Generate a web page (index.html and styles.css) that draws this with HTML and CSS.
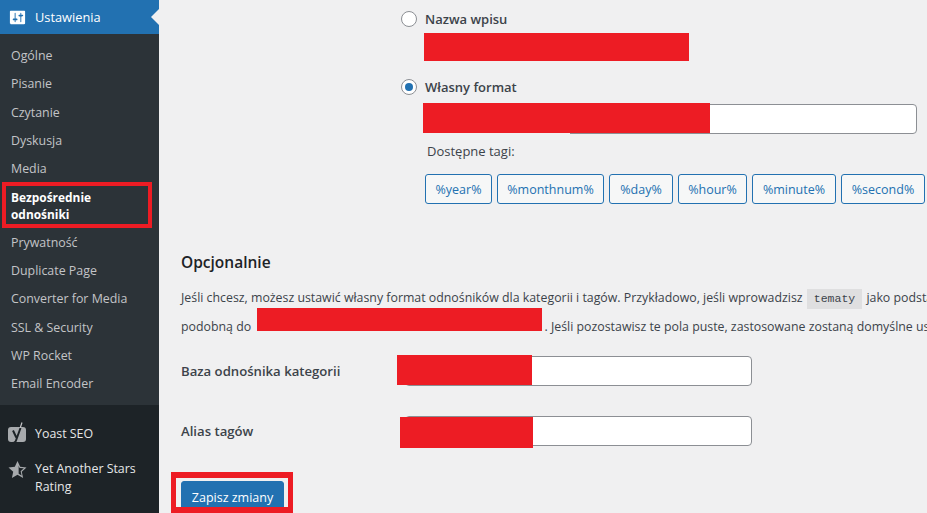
FILE: index.html
```html
<!DOCTYPE html>
<html lang="pl">
<head>
<meta charset="utf-8">
<title>Bezpośrednie odnośniki</title>
<link rel="stylesheet" href="styles.css">
</head>
<body>
<div class="layout">
  <aside class="sidebar">
    <div class="current">
      <svg class="icon-settings" width="19" height="19" viewBox="0 0 20 20"><path fill="#fff" fill-rule="evenodd" d="M18 16V4c0-.55-.45-1-1-1H3c-.55 0-1 .45-1 1v12c0 .55.45 1 1 1h14c.55 0 1-.45 1-1zM8 11h1c.55 0 1 .45 1 1s-.45 1-1 1H8v1.500c0 .28-.22.5-.5.5s-.5-.22-.5-.5V13H6c-.55 0-1-.45-1-1s.45-1 1-1h1V5.500c0-.28.22-.5.5-.5s.5.22.5.5V11zm5-2h-1c-.55 0-1-.45-1-1s.45-1 1-1h1V5.500c0-.28.22-.5.5-.5s.5.22.5.5V7h1c.55 0 1 .45 1 1s-.45 1-1 1h-1v5.500c0 .28-.22.5-.5.5s-.5-.22-.5-.5V9z"/></svg>
      <span>Ustawienia</span>
      <i class="notch"></i>
    </div>
    <nav class="submenu">
      <a>Ogólne</a>
      <a>Pisanie</a>
      <a>Czytanie</a>
      <a>Dyskusja</a>
      <a>Media</a>
      <a class="active">Bezpośrednie odnośniki</a>
      <a>Prywatność</a>
      <a>Duplicate Page</a>
      <a>Converter for Media</a>
      <a>SSL &amp; Security</a>
      <a>WP Rocket</a>
      <a>Email Encoder</a>
    </nav>
    <nav class="plugins">
      <a class="plugin">
        <svg class="icon-yoast" width="18" height="25" viewBox="0 0 18 25"><rect y="5" width="18" height="15" rx="3" fill="#a7aaad"/><path d="M14 .500 8.500 17c-.6 1.700-1.500 2.500-3.500 2.500" fill="none" stroke="#c3c4c7" stroke-width="1.200"/><path d="M12.500 6 8 18.500c-.5 1.500-1.500 2.500-3.500 2.500M5 8.500 8.300 15.500" fill="none" stroke="#1d2327" stroke-width="2"/></svg>
        <span>Yoast SEO</span>
      </a>
      <a class="plugin">
        <svg class="icon-star" width="19" height="19" viewBox="0 0 20 20"><path fill="#a7aaad" d="M10 1l2.800 6.200 6.700.7-5 4.500 1.400 6.600L10 15.600 4.100 19l1.400-6.600-5-4.500 6.700-.7z"/><path fill="#1d2327" d="M11.200 6l1 2.300 4.500.5-3.400 3.100 1 4.500-3.100-1.800z"/></svg>
        <span>Yet Another Stars Rating</span>
      </a>
    </nav>
    <div class="mark mark-link"></div>
  </aside>

  <main class="content">
    <section class="options">
      <label class="option">
        <input class="radio" type="radio" name="format">
        <span>Nazwa wpisu</span>
      </label>
      <div class="redact-line"></div>
      <label class="option option-second">
        <input class="radio" type="radio" name="format" checked>
        <span>Własny format</span>
      </label>
      <div class="format-field">
        <input class="text-input" type="text">
        <div class="redact redact-format"></div>
      </div>
      <p class="tags-label">Dostępne tagi:</p>
      <div class="tags">
        <button class="tag t1">%year%</button>
        <button class="tag t2">%monthnum%</button>
        <button class="tag t3">%day%</button>
        <button class="tag t4">%hour%</button>
        <button class="tag t5">%minute%</button>
        <button class="tag t6">%second%</button>
      </div>
    </section>

    <h2>Opcjonalnie</h2>
    <p class="intro">Jeśli chcesz, możesz ustawić własny format odnośników dla kategorii i tagów. Przykładowo, jeśli wprowadzisz <code>tematy</code> jako podstawę odnośników kategorii, otrzymasz strukturę<br>podobną do <span class="redact-inline"></span> . Jeśli pozostawisz te pola puste, zastosowane zostaną domyślne ustawienia.</p>

    <div class="field-row">
      <label>Baza odnośnika kategorii</label>
      <div class="field">
        <input class="text-input" type="text">
        <div class="redact redact-cat"></div>
      </div>
    </div>
    <div class="field-row field-row-tag">
      <label>Alias tagów</label>
      <div class="field">
        <input class="text-input" type="text">
        <div class="redact redact-tag"></div>
      </div>
    </div>

    <button class="save">Zapisz zmiany</button>
    <div class="mark mark-save"></div>
  </main>
</div>
</body>
</html>
```

FILE: styles.css
```css
* { box-sizing: border-box; }
html, body { margin: 0; height: 513px; overflow: hidden; }
body { background: #f0f0f1; color: #3c434a; font-family: "Open Sans", "Noto Sans", sans-serif; font-size: 13px; }

.layout { display: flex; height: 513px; width: 927px; overflow: hidden; }

/* Sidebar */
.sidebar { position: relative; width: 159px; flex: none; background: #1d2327; color: #f0f0f1; font-size: 12.4px; }
.current { position: relative; height: 34px; background: #2271b1; color: #fff; display: flex; align-items: center; gap: 8px; padding-left: 8px; font-size: 12.8px; }
.notch { position: absolute; right: 0; top: 9px; border: 8px solid transparent; border-left: 0; border-right-color: #f0f0f1; }
.submenu { background: #2c3338; height: 371px; padding-top: 8px; display: flex; flex-direction: column; }
.submenu a { display: block; color: #c3c4c7; padding: 5px 11px; line-height: 18.250px; }
.submenu a.active { color: #fff; font-weight: 700; font-size: 11.900px; line-height: 17.500px; padding: 5.700px 40px 5px 11px; }
.plugins { padding-top: 20px; display: flex; flex-direction: column; gap: 13px; }
.plugin { display: flex; gap: 9px; color: #e6e7e8; line-height: 18px; padding-left: 8px; align-items: flex-start; }
.plugin svg { flex: none; }
.plugin span { width: 116px; }
.plugin:first-child { height: 22px; }
.plugin .icon-star { margin-right: -1px; }
.icon-yoast { margin-top: -3px; }
.icon-star { margin-top: 0; }

/* Overlaid highlight marks */
.mark { position: absolute; border: 5px solid #ed1c24; }
.mark-link { left: 2px; top: 182px; width: 150px; height: 46px; border-width: 4px; }
.mark-save { left: 12px; top: 472px; width: 122px; height: 41px; border-width: 6px 5px; }

/* Content */
.content { position: relative; flex: 1; min-width: 0; padding-left: 22px; }
.options { padding: 10px 0 0 220px; }
.option { display: flex; align-items: center; gap: 8px; font-weight: 600; height: 18px; }
.radio { appearance: none; -webkit-appearance: none; margin: 0; width: 16px; height: 16px; border: 1px solid #8c8f94; border-radius: 50%; background: #fff; flex: none; position: relative; }
.radio:checked::before { content: ""; position: absolute; left: 3px; top: 3px; width: 8px; height: 8px; border-radius: 50%; background: #2271b1; }
.redact-line { margin: 5px 0 0 23px; width: 265px; height: 28px; background: #ed1c24; }
.option-second { margin-top: 17px; }
.format-field { position: relative; margin: 8px 0 0 22px; width: 494px; height: 30px; }
.text-input { display: block; width: 100%; height: 100%; margin: 0; border: 1px solid #8c8f94; border-radius: 4px; background: #fff; }
.redact { position: absolute; background: #ed1c24; }
.redact-format { left: 0; top: -1px; width: 287px; height: 30px; }
.redact-format::after { content: ""; position: absolute; left: 0; top: 100%; width: 147px; height: 2px; background: #f0f0f1; }
.tags-label { margin: 8px 0 0 26px; line-height: 18px; }
.tags { display: flex; gap: 5px; margin: 14px 0 0 24px; width: 520px; }
.tag { height: 30px; padding: 0; flex: none; border: 1px solid #2271b1; border-radius: 3px; background: #f6f7f7; color: #2271b1; font: inherit; font-size: 12.500px; }
.t1 { width: 67px; }
.t2 { width: 107px; }
.t3 { width: 64px; }
.t4 { width: 69px; }
.t5 { width: 84px; }
.t6 { width: 84px; }

h2 { margin: 47px 0 0; font-size: 15.500px; line-height: 22px; font-weight: 600; color: #1d2327; }
.intro { margin: 10px 0 0; width: 1000px; white-space: nowrap; font-size: 12.350px; line-height: 29px; color: #3c434a; }
code { display: inline-block; background: rgba(0,0,0,.07); font-family: "Liberation Mono", monospace; font-size: 11.500px; line-height: 20px; padding: 0 7px; margin: 0 1px; color: #3c434a; }
.redact-inline { display: inline-block; width: 285px; height: 23px; margin: -4px -1px 0 3px; background: #ed1c24; vertical-align: baseline; }

.field-row { display: flex; align-items: center; margin-top: 15px; height: 30px; font-weight: 600; font-size: 13.150px; }
.field-row label { width: 224px; flex: none; }
.field-row-tag { margin-top: 30px; }
.field { position: relative; width: 347px; height: 30px; }
.redact-cat { left: -8px; top: -1px; width: 135px; height: 30px; }
.redact-tag { left: -5px; top: 1px; width: 133px; height: 31px; }

.save { display: block; margin-top: 35px; width: 103px; height: 32px; border: 1px solid #2271b1; border-radius: 3px; background: #2271b1; color: #fff; font: inherit; font-size: 12.500px; padding: 0; }
```
